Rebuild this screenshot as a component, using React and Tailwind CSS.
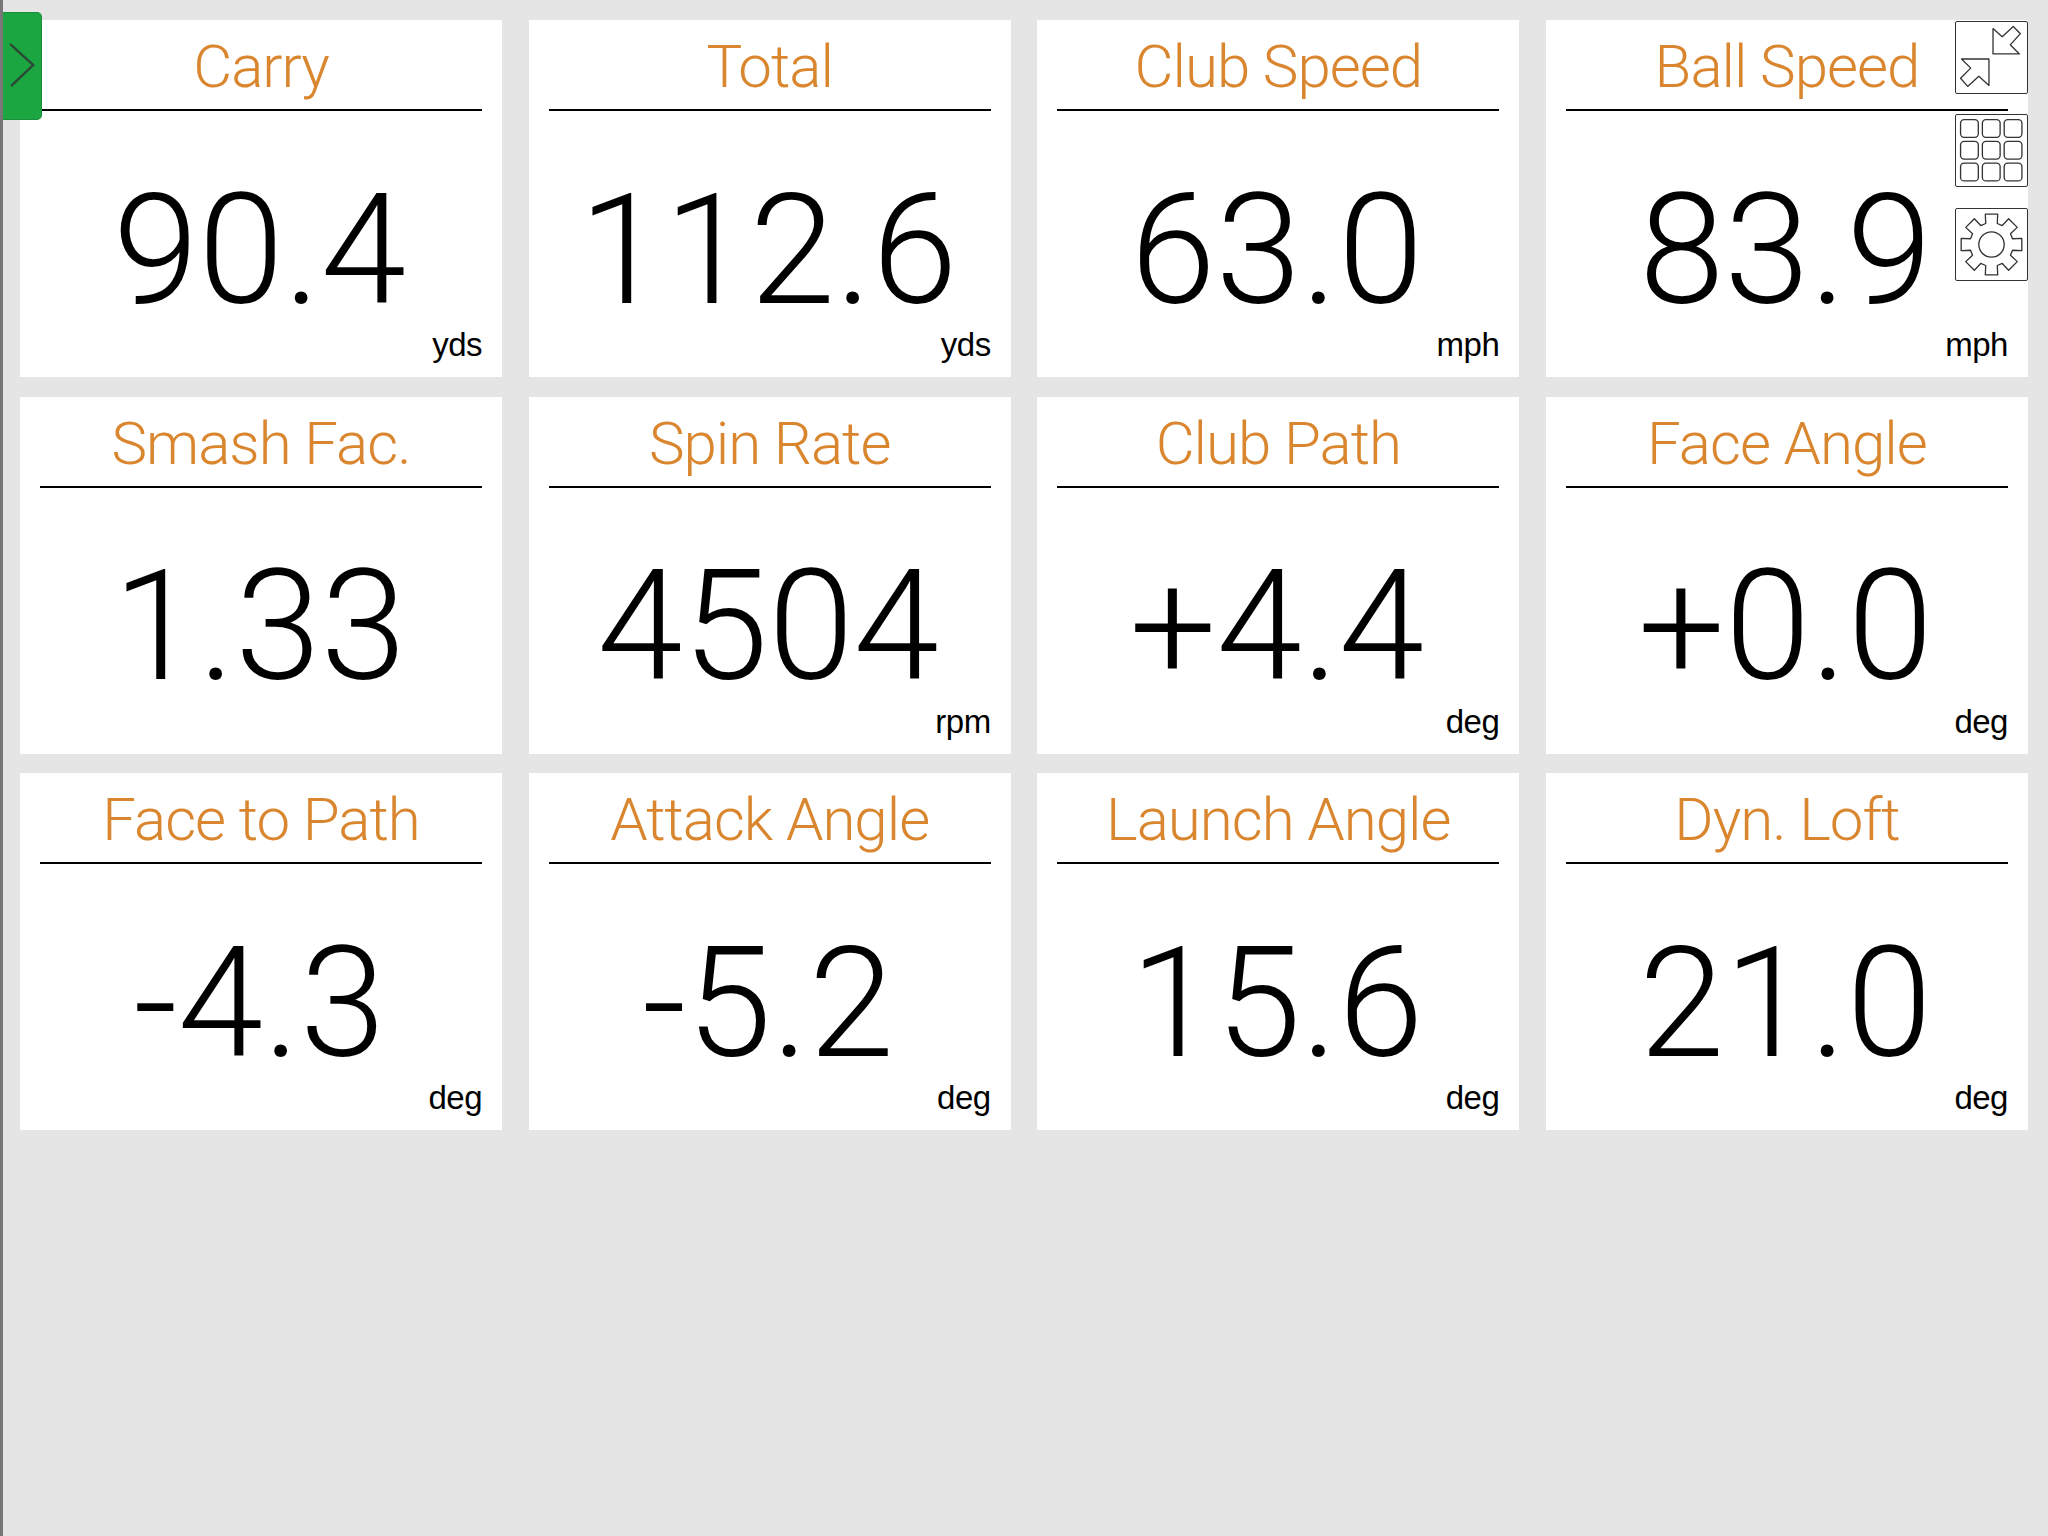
import React from "react";

const stats = [
  { title: "Carry", value: "90.4", unit: "yds" },
  { title: "Total", value: "112.6", unit: "yds" },
  { title: "Club Speed", value: "63.0", unit: "mph" },
  { title: "Ball Speed", value: "83.9", unit: "mph" },
  { title: "Smash Fac.", value: "1.33", unit: "" },
  { title: "Spin Rate", value: "4504", unit: "rpm" },
  { title: "Club Path", value: "+4.4", unit: "deg" },
  { title: "Face Angle", value: "+0.0", unit: "deg" },
  { title: "Face to Path", value: "-4.3", unit: "deg" },
  { title: "Attack Angle", value: "-5.2", unit: "deg" },
  { title: "Launch Angle", value: "15.6", unit: "deg" },
  { title: "Dyn. Loft", value: "21.0", unit: "deg" },
];

// 8 tooth gear outline, one tooth on top
const gearPoints = () => {
  const pts = [];
  for (let i = 0; i < 8; i++) {
    const a = (i * Math.PI) / 4 - Math.PI / 2;
    const at = (r, d) => {
      const x = 36.5 + r * Math.cos(a + d);
      const y = 36.5 + r * Math.sin(a + d);
      return `${x.toFixed(1)},${y.toFixed(1)}`;
    };
    pts.push(at(21.5, -0.27), at(30.5, -0.2), at(30.5, 0.2), at(21.5, 0.27));
  }
  return pts.join(" ");
};

const StatCard = ({ title, value, unit }) => (
  <div className="flex h-[357px] flex-col bg-white px-5">
    <div className="h-[91px] border-b-2 border-black pt-[14px] text-center text-[60px] leading-[66px] font-light tracking-[-1px] text-[#d9862f]">
      {title}
    </div>
    <div className="flex h-[216px] items-center justify-center pt-[63px] pr-[3px] text-[154px] leading-[150px] font-light text-black">
      {value}
    </div>
    <div className="h-[32px] pt-[2px] text-right font-['Liberation_Sans',sans-serif] text-[33px] leading-[32px] tracking-[-0.5px] text-black">
      {unit}
    </div>
  </div>
);

const ToolButton = ({ children }) => (
  <button className="h-[73px] w-[73px] rounded-[2px] border-[1.5px] border-[#333] bg-white">
    <svg viewBox="1.5 1.5 70 70" className="h-full w-full" fill="none" stroke="#333" strokeWidth="1.3" strokeLinejoin="round">
      {children}
    </svg>
  </button>
);

export default function App() {
  return (
    <div className="relative min-h-[1536px] border-l-[3px] border-[#777] bg-[#e6e5e6] font-['Roboto',sans-serif]">
      <div className="grid grid-cols-[482px_482px_482px_482px] gap-x-[26.67px] gap-y-[19.5px] pt-5 pl-[17px]">
        {stats.map((stat) => (
          <StatCard key={stat.title} {...stat} />
        ))}
      </div>

      {/* side tab */}
      <div className="absolute top-3 left-0 flex h-[108px] w-[39px] items-center rounded-r-[5px] border border-l-0 border-[#1a8f3c] bg-[#1ba642]">
        <svg viewBox="0 0 39 108" className="h-full w-full" fill="none" stroke="#2a4a35" strokeWidth="2.5" strokeLinecap="round">
          <path d="M8 32 L31 53 L9 74" />
        </svg>
      </div>

      {/* tool buttons */}
      <div className="absolute top-[20.7px] right-[20.5px] flex flex-col gap-[20.7px]">
        <ToolButton>
          <path d="M38 33 V8 L47 16 L58 6 L65 13 L55 24 L64 33 Z" />
          <path d="M34 38 H7 L16 47 L6 57 L13 65 L24 55 L34 64 Z" />
        </ToolButton>
        <ToolButton>
          {[6, 27.5, 49].map((x) =>
            [6, 27.5, 49].map((y) => <rect key={`${x}-${y}`} x={x} y={y} width="17.5" height="17.5" rx="3.5" />)
          )}
        </ToolButton>
        <ToolButton>
          <polygon points={gearPoints()} />
          <circle cx="36.5" cy="36.5" r="12.5" />
        </ToolButton>
      </div>
    </div>
  );
}
